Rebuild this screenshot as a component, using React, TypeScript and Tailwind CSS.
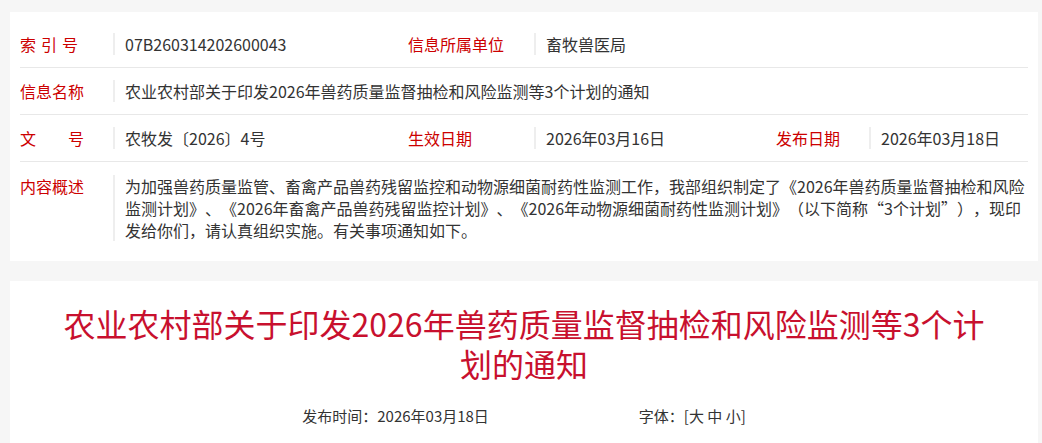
import React from 'react';

const font = { fontFamily: '"Noto Sans CJK SC", "Microsoft YaHei", sans-serif' };

function Cell({ label, value, labelWidth, width, labelClass }: { label: string; value: string; labelWidth: string; width?: string; labelClass?: string }) {
  return (
    <div className={`flex items-center ${width ?? ''}`}>
      <span className={`${labelWidth} shrink-0 whitespace-pre text-[#cc0000] ${labelClass ?? ''}`}>{label}</span>
      <span className="h-[22px] w-[2px] shrink-0 bg-[#eeeeee]" />
      <span className="pl-[10px] text-[#333333]">{value}</span>
    </div>
  );
}

export default function App() {
  return (
    <div className="min-h-screen bg-[#f6f6f6] pl-[10px] pt-3 [text-spacing-trim:space-all]" style={font}>
      <div className="w-[1028px] bg-white px-[10px] pb-5 pt-[9px] text-[16px] leading-[22px]">
        <div className="flex h-[47px] items-center border-b border-[#e8e8e8]">
          <Cell label="索引号" value="07B260314202600043" labelWidth="w-[93px]" width="w-[388px]" labelClass="tracking-[5px]" />
          <Cell label="信息所属单位" value="畜牧兽医局" labelWidth="w-[126px]" />
        </div>
        <div className="flex h-[47px] items-center border-b border-[#e8e8e8]">
          <Cell
            label="信息名称"
            value="农业农村部关于印发2026年兽药质量监督抽检和风险监测等3个计划的通知"
            labelWidth="w-[93px]"
          />
        </div>
        <div className="flex h-[47px] items-center border-b border-[#e8e8e8]">
          <Cell label="文　　号" value="农牧发〔2026〕4号" labelWidth="w-[93px]" width="w-[388px]" />
          <Cell label="生效日期" value="2026年03月16日" labelWidth="w-[126px]" width="w-[368px]" />
          <Cell label="发布日期" value="2026年03月18日" labelWidth="w-[93px]" />
        </div>
        <div className="flex pt-[13px]">
          <span className="w-[93px] shrink-0 text-[#cc0000]">内容概述</span>
          <span className="w-[2px] shrink-0 bg-[#eeeeee]" />
          <p className="pl-[10px] text-[#333333]">
            为加强兽药质量监管、畜禽产品兽药残留监控和动物源细菌耐药性监测工作，我部组织制定了《2026年兽药质量监督抽检和风险
            <br />
            监测计划》、《2026年畜禽产品兽药残留监控计划》、《2026年动物源细菌耐药性监测计划》（以下简称“3个计划”），现印
            <br />
            发给你们，请认真组织实施。有关事项通知如下。
          </p>
        </div>
      </div>

      <div className="mt-5 w-[1028px] bg-white pb-8 pt-[22px]">
        <h1 className="px-[50px] text-center text-[32px] leading-[40px] text-[#c8102e]">
          农业农村部关于印发2026年兽药质量监督抽检和风险监测等3个计划的通知
        </h1>
        <div className="mt-[22px] flex justify-center gap-[150px] text-[15px] leading-[22px] text-[#333333]">
          <span>发布时间：2026年03月18日</span>
          <span>字体：[大 中 小]</span>
        </div>
      </div>
    </div>
  );
}
